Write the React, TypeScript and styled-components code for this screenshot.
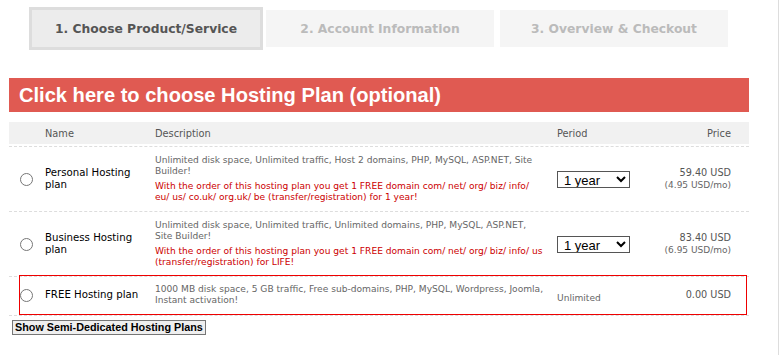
import React, { useState } from 'react';
import styled, { createGlobalStyle } from 'styled-components';

interface IPlan {
  id: string;
  name: string;
  description: string;
  promo?: string;
  periods?: string[];
  price: string;
  monthly?: string;
  highlighted?: boolean;
}

const plans: IPlan[] = [
  {
    id: 'personal',
    name: 'Personal Hosting plan',
    description:
      'Unlimited disk space, Unlimited traffic, Host 2 domains, PHP, MySQL, ASP.NET, Site Builder!',
    promo:
      'With the order of this hosting plan you get 1 FREE domain com/ net/ org/ biz/ info/ eu/ us/ co.uk/ org.uk/ be (transfer/registration) for 1 year!',
    periods: ['1 year', '2 years', '3 years'],
    price: '59.40 USD',
    monthly: '(4.95 USD/mo)',
  },
  {
    id: 'business',
    name: 'Business Hosting plan',
    description:
      'Unlimited disk space, Unlimited traffic, Unlimited domains, PHP, MySQL, ASP.NET, Site Builder!',
    promo:
      'With the order of this hosting plan you get 1 FREE domain com/ net/ org/ biz/ info/ us (transfer/registration) for LIFE!',
    periods: ['1 year', '2 years', '3 years'],
    price: '83.40 USD',
    monthly: '(6.95 USD/mo)',
  },
  {
    id: 'free',
    name: 'FREE Hosting plan',
    description:
      '1000 MB disk space, 5 GB traffic, Free sub-domains, PHP, MySQL, Wordpress, Joomla, Instant activation!',
    price: '0.00 USD',
    highlighted: true,
  },
];

const steps = ['1. Choose Product/Service', '2. Account Information', '3. Overview & Checkout'];

const App = (): JSX.Element => {
  const [selected, setSelected] = useState('');

  return (
    <>
      <GlobalStyle />
      <Page>
        <Steps>
          {steps.map((step, i) => (
            <Step key={step} $active={i === 0}>
              {step}
            </Step>
          ))}
        </Steps>
        <Banner>Click here to choose Hosting Plan (optional)</Banner>
        <PlanTable>
          <HeadRow>
            <span />
            <span>Name</span>
            <span>Description</span>
            <span>Period</span>
            <PriceHead>Price</PriceHead>
          </HeadRow>
          {plans.map((plan) => (
            <RowWrap key={plan.id}>
              <Row $highlighted={!!plan.highlighted}>
                <RadioCell>
                  <Radio
                    type="radio"
                    name="plan"
                    checked={selected === plan.id}
                    onChange={() => setSelected(plan.id)}
                  />
                </RadioCell>
                <Name>{plan.name}</Name>
                <Desc>
                  <Gray>{plan.description}</Gray>
                  {plan.promo && <Promo>{plan.promo}</Promo>}
                </Desc>
                <div>
                  {plan.periods ? (
                    <PeriodSelect defaultValue={plan.periods[0]}>
                      {plan.periods.map((p) => (
                        <option key={p}>{p}</option>
                      ))}
                    </PeriodSelect>
                  ) : (
                    <Unlimited>Unlimited</Unlimited>
                  )}
                </div>
                <Price>
                  <div>{plan.price}</div>
                  {plan.monthly && <Monthly>{plan.monthly}</Monthly>}
                </Price>
              </Row>
            </RowWrap>
          ))}
        </PlanTable>
        <MoreButton>Show Semi-Dedicated Hosting Plans</MoreButton>
      </Page>
    </>
  );
};

const GlobalStyle = createGlobalStyle`
  body {
    margin: 0;
    background: #fff;
    font-family: "DejaVu Sans", sans-serif;
  }
`;

const Page = styled.div`
  width: 778px;
  height: 355px;
  border-right: 1px solid #ddd;
  box-sizing: content-box;
`;

const Steps = styled.div`
  display: flex;
  padding: 7px 0 0 29px;
`;

const Step = styled.div<{ $active: boolean }>`
  width: 228px;
  height: 37px;
  margin: ${(p) => (p.$active ? '0' : '3px')};
  border: ${(p) => (p.$active ? '3px solid #ddd' : 'none')};
  background: ${(p) => (p.$active ? '#ececec' : '#f5f5f5')};
  color: ${(p) => (p.$active ? '#555' : '#bbb')};
  font-weight: bold;
  font-size: 12.3px;
  display: flex;
  align-items: center;
  justify-content: center;
`;

const Banner = styled.div`
  margin: 28px 0 0 9px;
  width: 740px;
  height: 34px;
  background: #e05a52;
  color: #fff;
  font-family: "Liberation Sans", Arial, sans-serif;
  font-weight: bold;
  font-size: 20.1px;
  line-height: 35px;
  padding-left: 10px;
  box-sizing: border-box;
`;

const PlanTable = styled.div`
  margin: 10px 0 0 9px;
  width: 740px;
`;

const columns = (first: number) => `${first}px 110px 402px 100px 1fr`;

const HeadRow = styled.div`
  display: grid;
  grid-template-columns: ${columns(36)};
  align-items: center;
  height: 22px;
  background: #f1f1f1;
  color: #555;
  font-size: 9.8px;
  padding-right: 18px;
  margin-bottom: 2px;
`;

const PriceHead = styled.span`
  text-align: right;
`;

const RowWrap = styled.div`
  border-top: 1px dashed #ddd;
  &:last-child {
    border-bottom: 1px dashed #ddd;
  }
`;

const Row = styled.div<{ $highlighted: boolean }>`
  display: grid;
  grid-template-columns: ${(p) => columns(p.$highlighted ? 25 : 36)};
  align-items: center;
  min-height: ${(p) => (p.$highlighted ? '35px' : '64px')};
  padding-right: ${(p) => (p.$highlighted ? '15px' : '18px')};
  margin: ${(p) => (p.$highlighted ? '-2px 2px 0 10px' : '0')};
  border: ${(p) => (p.$highlighted ? '1px solid #e00' : 'none')};
`;

const RadioCell = styled.div`
  display: flex;
  justify-content: flex-end;
  padding-right: 12px;
`;

const Radio = styled.input`
  width: 13px;
  height: 13px;
  margin: 0;
  accent-color: #555;
`;

const Name = styled.div`
  font-size: 10.2px;
  color: #000;
  line-height: 12px;
  padding-right: 10px;
`;

const Desc = styled.div`
  padding: 8px 12.5px 8px 0;
  font-size: 9.1px;
  line-height: 11px;
`;

const Gray = styled.div`
  color: #666;
`;

const Promo = styled.div`
  color: #c00;
  margin-top: 4px;
`;

const PeriodSelect = styled.select`
  width: 73px;
  height: 17px;
  border: 1px solid #555;
  border-radius: 0;
  background: #fff;
  font-family: "Liberation Sans", Arial, sans-serif;
  font-size: 13px;
  color: #000;
  padding: 0 0 0 2px;
`;

const Unlimited = styled.span`
  color: #666;
  font-size: 9.1px;
`;

const Price = styled.div`
  text-align: right;
  color: #555;
  font-size: 9.7px;
  line-height: 12px;
`;

const Monthly = styled.div`
  font-size: 9px;
  color: #666;
`;

const MoreButton = styled.button`
  margin: 2px 0 0 12px;
  height: 15px;
  padding: 0 2px;
  background: #efefef;
  border: 1px solid #767676;
  border-radius: 0;
  font-family: "Liberation Sans", Arial, sans-serif;
  font-weight: bold;
  font-size: 10.8px;
  line-height: 13px;
  color: #000;
`;

export default App;
